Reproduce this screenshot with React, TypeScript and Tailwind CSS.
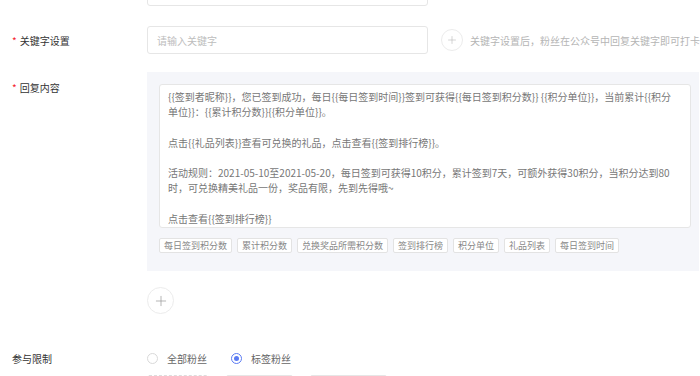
import { Plus } from 'lucide-react';

const FONT = { fontFamily: '"Noto Sans CJK SC", "Noto Sans", sans-serif' };

const REPLY_LINES = [
  '{{签到者昵称}}，您已签到成功，每日{{每日签到时间}}签到可获得{{每日签到积分数}} {{积分单位}}，当前累计{{积分',
  '单位}}：{{累计积分数}}{{积分单位}}。',
  '',
  '点击{{礼品列表}}查看可兑换的礼品，点击查看{{签到排行榜}}。',
  '',
  '活动规则：2021-05-10至2021-05-20，每日签到可获得10积分，累计签到7天，可额外获得30积分，当积分达到80',
  '时，可兑换精美礼品一份，奖品有限，先到先得哦~',
  '',
  '点击查看{{签到排行榜}}',
];

const TAGS = ['每日签到积分数', '累计积分数', '兑换奖品所需积分数', '签到排行榜', '积分单位', '礼品列表', '每日签到时间'];

function Label({ text, required }: { text: string; required?: boolean }) {
  return (
    <div className="flex w-[147px] shrink-0 items-center pl-[12px] text-[10px] text-[#333]">
      {required && <span className="mr-[3px] text-[#f5222d]">*</span>}
      <span>{text}</span>
    </div>
  );
}

export default function App() {
  return (
    <div className="h-[376px] w-[700px] overflow-hidden bg-white" style={FONT}>
      <div className="-mt-[22px] flex">
        <div className="w-[147px] shrink-0" />
        <div className="h-[28px] w-[281px] shrink-0 rounded-[3px] border border-[#e6e6e6]" />
      </div>

      <div className="mt-[20px] flex h-[28px] items-center">
        <Label text="关键字设置" required />
        <div className="flex h-[28px] w-[281px] shrink-0 items-center rounded-[3px] border border-[#e6e6e6] pl-[9px] text-[10px] text-[#bdbdbd]">
          请输入关键字
        </div>
        <div className="ml-[13px] flex h-[22px] w-[22px] shrink-0 items-center justify-center rounded-full border border-[#ececec]">
          <Plus className="h-[12px] w-[12px] text-[#bbb]" strokeWidth={1.2} />
        </div>
        <span className="ml-[7px] whitespace-nowrap text-[10px] text-[#b5b5b5]">
          关键字设置后，粉丝在公众号中回复关键字即可打卡签到
        </span>
      </div>

      <div className="mt-[18px] flex">
        <div className="pt-[8px]">
          <Label text="回复内容" required />
        </div>
        <div className="w-[552px] shrink-0 bg-[#f5f6fa] pb-[18px] pl-[12px] pr-[8px] pt-[12px]">
          <div className="h-[144px] rounded-[3px] border border-[#e6e6e6] bg-white pl-[8px] pt-[4px] text-[10px] leading-[15.2px] text-[#777]">
            {REPLY_LINES.map((line, i) => (
              <div key={i} className="h-[15.2px] whitespace-nowrap">
                {line}
              </div>
            ))}
          </div>
          <div className="mt-[10px] flex gap-[5px]">
            {TAGS.map((tag) => (
              <span
                key={tag}
                className="flex h-[15px] items-center rounded-[2px] border border-[#e3e3e3] bg-white px-[4px] text-[9px] text-[#888]"
              >
                {tag}
              </span>
            ))}
          </div>
        </div>
      </div>

      <div className="mt-[16px] flex">
        <div className="w-[147px] shrink-0" />
        <div className="flex h-[27px] w-[27px] items-center justify-center rounded-full border border-[#ececec]">
          <Plus className="h-[16px] w-[16px] text-[#999]" strokeWidth={1.1} />
        </div>
      </div>

      <div className="mt-[37px] flex h-[14px] items-center">
        <Label text="参与限制" />
        <div className="flex items-center text-[10px] text-[#666]">
          <span className="h-[11px] w-[11px] rounded-full border border-[#d9d9d9] bg-white" />
          <span className="ml-[9px]">全部粉丝</span>
          <span className="ml-[24px] flex h-[11px] w-[11px] items-center justify-center rounded-full border border-[#5b7bf3]">
            <span className="h-[5px] w-[5px] rounded-full bg-[#5b7bf3]" />
          </span>
          <span className="ml-[9px]">标签粉丝</span>
        </div>
      </div>

      <div className="mt-[10px] flex gap-[17px]">
        <div className="w-[130px] shrink-0" />
        <div className="h-[20px] w-[62px] rounded-[2px] border border-dashed border-[#ddd]" />
        <div className="h-[20px] w-[67px] rounded-[2px] border border-[#e6e6e6]" />
        <div className="h-[20px] w-[77px] rounded-[2px] border border-[#e6e6e6]" />
      </div>
    </div>
  );
}
